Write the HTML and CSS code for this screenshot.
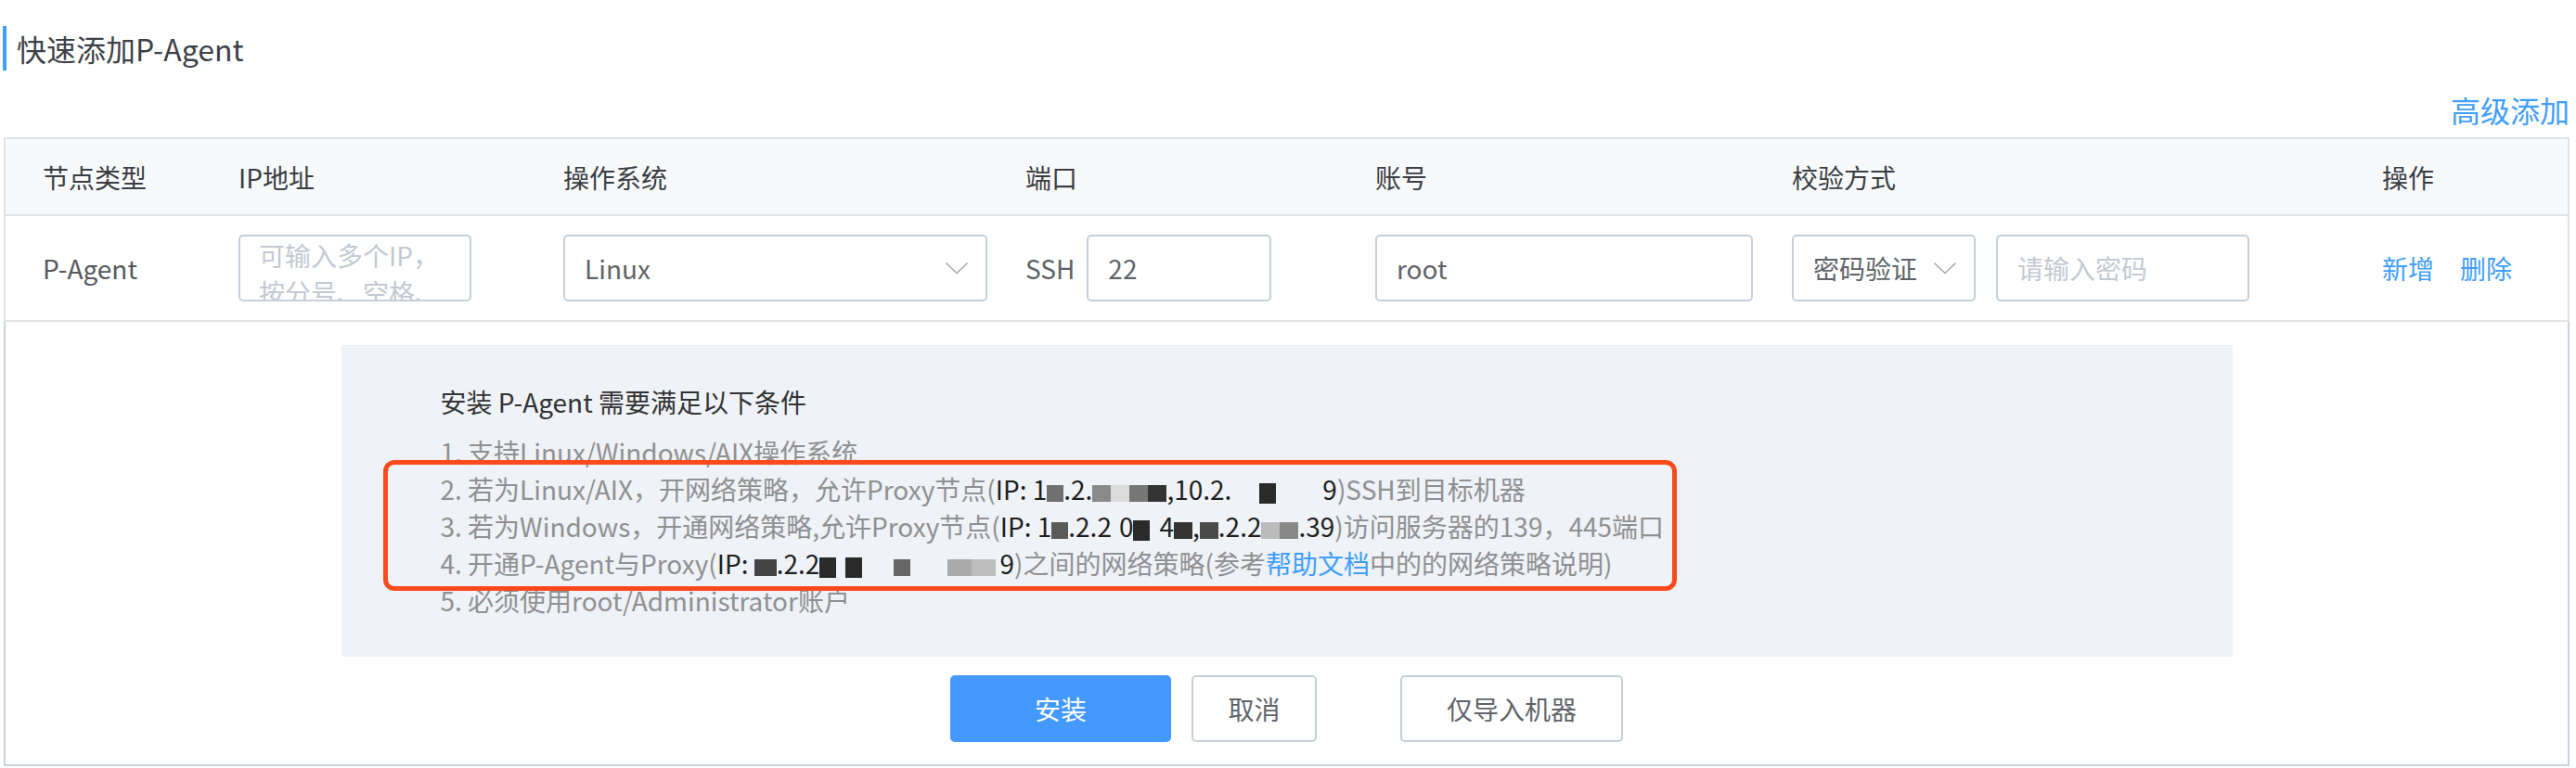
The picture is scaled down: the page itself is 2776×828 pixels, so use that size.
FILE: index.html
```html
<!DOCTYPE html>
<html lang="zh-CN">
<head>
<meta charset="utf-8">
<title>快速添加P-Agent</title>
<link rel="stylesheet" href="styles.css">
</head>
<body>
<div class="page">
  <h1 class="title">快速添加P-Agent</h1>
  <div class="toolbar"><a class="link adv">高级添加</a></div>

  <div class="table">
    <div class="row head">
      <div class="cell c1">节点类型</div>
      <div class="cell">IP地址</div>
      <div class="cell">操作系统</div>
      <div class="cell">端口</div>
      <div class="cell">账号</div>
      <div class="cell">校验方式</div>
      <div class="cell">操作</div>
    </div>

    <div class="row body">
      <div class="cell c1 type">P-Agent</div>
      <div class="cell"><textarea class="field ip" placeholder="可输入多个IP，按分号、空格、逗号或换行分隔"></textarea></div>
      <div class="cell">
        <div class="field select os">
          <span>Linux</span>
          <svg class="chev" width="26" height="14" viewBox="0 0 26 14"><polyline points="1.5,1.5 13,12.5 24.5,1.5" fill="none" stroke="#a3a8b0" stroke-width="1.6"/></svg>
        </div>
      </div>
      <div class="cell"><span class="port-label">SSH</span><input class="field port" value="22"></div>
      <div class="cell"><input class="field account" value="root"></div>
      <div class="cell">
        <div class="field select auth">
          <span>密码验证</span>
          <svg class="chev" width="26" height="14" viewBox="0 0 26 14"><polyline points="1.5,1.5 13,12.5 24.5,1.5" fill="none" stroke="#a3a8b0" stroke-width="1.6"/></svg>
        </div>
        <input class="field pwd" placeholder="请输入密码">
      </div>
      <div class="cell ops"><a class="link">新增</a><a class="link">删除</a></div>
    </div>

    <div class="expand">
      <div class="notice">
        <div class="notice-title">安装 P-Agent 需要满足以下条件</div>
        <ul class="conds">
          <li>1. 支持Linux/Windows/AIX操作系统</li>
          <li>2. 若为Linux/AIX，开网络策略，允许Proxy节点(<span class="ipt">IP: 1<span class="mz k1"></span>.2.<span class="mz k2"></span><span class="mz k3"></span><span class="mz k4"></span><span class="mz k5"></span>,10.2.<span class="sp30"></span><span class="mz k6"></span><span class="sp50"></span>9</span>)SSH到目标机器</li>
          <li>3. 若为Windows，开通网络策略,允许Proxy节点(<span class="ipt">IP: 1<span class="mz k7"></span>.2.2<span class="sp8"></span>0<span class="mz k6"></span><span class="sp10"></span>4<span class="mz k5"></span>,<span class="mz k8"></span>.2.2<span class="mz k9"></span><span class="mz k10"></span>.39</span>)访问服务器的139，445端口</li>
          <li>4. 开通P-Agent与Proxy(<span class="ipt">IP: <span class="mz k11"></span>.2.2<span class="mz k6"></span><span class="sp10"></span><span class="mz k6"></span><span class="sp34"></span><span class="mz k12"></span><span class="sp40"></span><span class="mz k13"></span><span class="mz k14"></span><span class="sp4"></span>9</span>)之间的网络策略(参考<a class="link">帮助文档</a>中的的网络策略说明)</li>
          <li>5. 必须使用root/Administrator账户</li>
        </ul>
        <div class="mark"></div>
      </div>
      <div class="actions">
        <button class="btn primary">安装</button>
        <button class="btn cancel">取消</button>
        <button class="btn import">仅导入机器</button>
      </div>
    </div>
  </div>
</div>
</body>
</html>
```

FILE: styles.css
```css
* { box-sizing: border-box; }

html, body {
  margin: 0;
  padding: 0;
  background: #ffffff;
}

body {
  font-family: "Noto Sans CJK SC", "Noto Sans", "Liberation Sans", sans-serif;
  font-size: 28px;
  color: #3c3f44;
  width: 2776px;
  height: 828px;
  overflow: hidden;
}

.page {
  padding: 28px 7px 0 4px;
}

.title {
  margin: 0 0 0 -1px;
  height: 48px;
  line-height: 48px;
  font-size: 32px;
  font-weight: 400;
  color: #3d4147;
  border-left: 4px solid #409eff;
  padding-left: 11px;
}

.toolbar {
  height: 72px;
  padding-top: 22px;
  line-height: 40px;
  text-align: right;
}

.link {
  color: #409eff;
  cursor: pointer;
  text-decoration: none;
}

.adv {
  font-size: 32px;
}

.table {
  width: 2765px;
}

.row {
  display: grid;
  grid-template-columns: 251px 350px 498px 377px 449px 636px 200px;
  align-items: center;
}

.head {
  height: 85px;
  background: #f8f9fb;
  border: 2px solid #e1e3e7;
  color: #3a3d42;
}

.body {
  height: 114px;
  border: 2px solid #e1e3e7;
  border-top: none;
  background: #ffffff;
}

.cell {
  display: flex;
  align-items: center;
  white-space: nowrap;
}

.c1 {
  padding-left: 40px;
}

.type {
  color: #55585d;
}

.field {
  height: 72px;
  border: 2px solid #c6cfda;
  border-radius: 5px;
  background: #ffffff;
  font-family: inherit;
  font-size: 28px;
  color: #5f6368;
  padding: 0 21px;
  outline: none;
}

.field::placeholder {
  color: #c2c9d3;
}

.ip {
  width: 251px;
  resize: none;
  overflow: hidden;
  line-height: 40px;
  padding: 0 20px;
  white-space: normal;
}

.select {
  display: flex;
  align-items: center;
  justify-content: space-between;
  padding: 0 18px 0 21px;
}

.chev {
  display: block;
}

.os {
  width: 457px;
}

.port-label {
  color: #5f6368;
  margin-right: 13px;
}

.port {
  width: 199px;
}

.account {
  width: 407px;
}

.auth {
  width: 198px;
}

.pwd {
  width: 273px;
  margin-left: 22px;
}

.ops {
  gap: 28px;
}

.expand {
  border: 2px solid #c9d2dd;
  border-top: none;
  padding: 25px 0 24px;
}

.notice {
  position: relative;
  width: 2038px;
  margin: 0 auto;
  height: 336px;
  background: #eff2f7;
  padding: 41px 60px 41px 107px;
}

.notice-title {
  line-height: 40px;
  color: #333333;
}

.conds {
  list-style: none;
  margin: 14px 0 0;
  padding: 0;
  color: #8f9092;
}

.conds li {
  line-height: 40px;
  white-space: nowrap;
}

.ipt {
  color: #1e1e1e;
}

.mz {
  display: inline-block;
  height: 18px;
  vertical-align: -2px;
}

.k1 { width: 18px; background: #707070; }
.k2 { width: 20px; background: #8a8a8a; }
.k3 { width: 20px; background: #dcdcdc; }
.k4 { width: 20px; background: #777777; }
.k5 { width: 20px; background: #333333; }
.k6 { width: 18px; height: 22px; background: #2a2a2a; vertical-align: -4px; }
.k7 { width: 18px; background: #5a5a5a; }
.k8 { width: 20px; background: #4a4a4a; }
.k9 { width: 20px; background: #bbbbbb; }
.k10 { width: 20px; background: #888888; }
.k11 { width: 24px; background: #444444; }
.k12 { width: 18px; background: #666666; }
.k13 { width: 26px; background: #aaaaaa; }
.k14 { width: 26px; background: #bdbdbd; }

.sp4, .sp8, .sp10, .sp30, .sp34, .sp40, .sp50 { display: inline-block; }
.sp4 { width: 4px; }
.sp8 { width: 8px; }
.sp10 { width: 10px; }
.sp30 { width: 30px; }
.sp34 { width: 34px; }
.sp40 { width: 40px; }
.sp50 { width: 50px; }

.mark {
  position: absolute;
  left: 45px;
  top: 124px;
  width: 1394px;
  height: 141px;
  border: 5px solid #fc4a1c;
  border-radius: 12px;
  pointer-events: none;
}

.actions {
  display: flex;
  justify-content: center;
  margin-top: 20px;
}

.btn {
  height: 72px;
  font-family: inherit;
  font-size: 28px;
  border: 2px solid #c6cfda;
  border-radius: 5px;
  background: #ffffff;
  color: #60646a;
  padding: 0;
  cursor: pointer;
}

.primary {
  width: 238px;
  background: #4499fe;
  border-color: #4499fe;
  color: #ffffff;
}

.cancel {
  width: 135px;
  margin-left: 22px;
}

.import {
  width: 240px;
  margin-left: 90px;
}
```
